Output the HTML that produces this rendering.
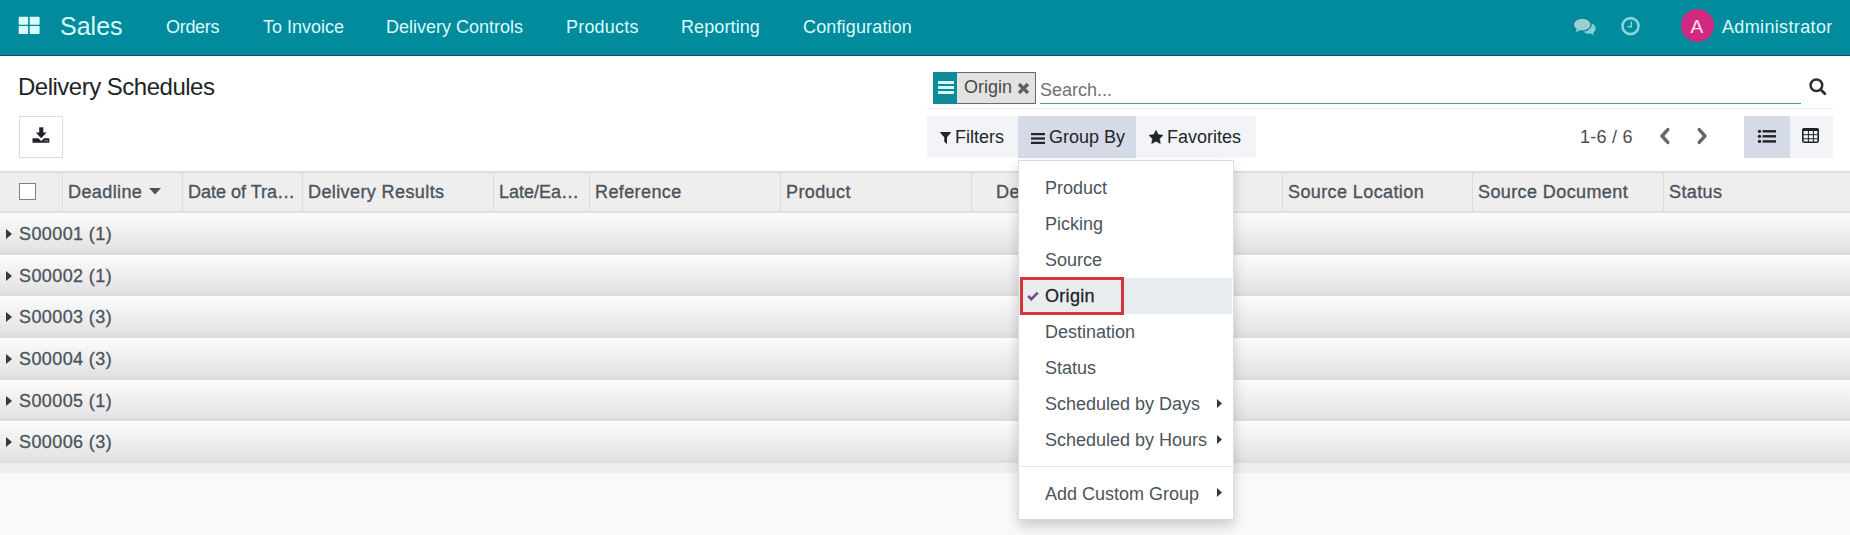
<!DOCTYPE html>
<html><head><meta charset="utf-8">
<style>
*{box-sizing:border-box;margin:0;padding:0}
html,body{width:1850px;height:535px;overflow:hidden}
body{position:relative;background:#f8f9fa;font-family:"Liberation Sans",sans-serif;color:#4c4c4c}
.abs{position:absolute}
.nav{left:0;top:0;width:1850px;height:56px;background:#018b9c;border-bottom:1px solid #07505e}
.nt{position:absolute;top:0;line-height:55px;height:55px;color:#dafcff;font-size:18px;white-space:nowrap}
.cp{left:0;top:56px;width:1850px;height:115px;background:#fff}
.txt{position:absolute;white-space:nowrap}
.thead{left:0;top:171px;width:1850px;height:42px;background:#eeeeee;border-top:2px solid #dcdde1;border-bottom:2px solid #dee0e4}
.th{position:absolute;top:-1px;height:40px;line-height:40px;font-size:18px;letter-spacing:0.4px;color:#4b545c;-webkit-text-stroke:0.35px #4b545c;white-space:nowrap}
.sep{position:absolute;top:-1px;width:1px;height:39px;background:#dcdcdc}
.grow{position:absolute;left:0;width:1850px;height:41.65px;background:linear-gradient(to bottom,#fcfcfc 0,#e2e2e2 calc(100% - 3px),#dcdde1 calc(100% - 3px),#dcdde1 100%)}
.gt{position:absolute;left:19px;top:1px;line-height:40px;letter-spacing:0.4px;font-size:18px;color:#4b545c;-webkit-text-stroke:0.3px #4b545c;white-space:nowrap}
.dd{left:1018px;top:160px;width:216px;height:360px;background:#fff;border:1px solid #dcdcdc;box-shadow:0 6px 12px rgba(0,0,0,.18)}
.di{position:absolute;left:26px;font-size:18px;color:#4b545c;white-space:nowrap}
</style></head><body>

<!-- NAVBAR -->
<div class="abs nav">
  <svg class="abs" style="left:18px;top:16px" width="23" height="20" viewBox="0 0 23 20">
    <rect x="0.7" y="0.7" width="9.4" height="8.1" rx="0.8" fill="#dafcff"/>
    <rect x="11.7" y="0.7" width="9.9" height="8.1" rx="0.8" fill="#dafcff"/>
    <rect x="0.7" y="9.9" width="9.4" height="8.1" rx="0.8" fill="#dafcff"/>
    <rect x="11.7" y="9.9" width="9.9" height="8.1" rx="0.8" fill="#dafcff"/>
  </svg>
  <div class="nt" style="left:60px;top:-1px;font-size:25px">Sales</div>
  <div class="nt" style="left:166px;letter-spacing:-0.3px">Orders</div>
  <div class="nt" style="left:263px">To Invoice</div>
  <div class="nt" style="left:386px">Delivery Controls</div>
  <div class="nt" style="left:566px;letter-spacing:0.2px">Products</div>
  <div class="nt" style="left:681px;letter-spacing:0.1px">Reporting</div>
  <div class="nt" style="left:803px;letter-spacing:0.15px">Configuration</div>
  <!-- chat icon -->
  <svg class="abs" style="left:1572px;top:16px" width="26" height="21" viewBox="0 0 26 21">
    <ellipse cx="17" cy="12.4" rx="6.6" ry="5.4" fill="#82d3d8"/>
    <path d="M18.5 16.5 L21.6 19.6 L21.2 15.2 Z" fill="#82d3d8"/>
    <ellipse cx="10.2" cy="8.6" rx="8.9" ry="6.6" fill="#9ccfd3" stroke="#03808f" stroke-width="1.3"/>
    <path d="M4.6 13 L4 16 L8.5 14.2 Z" fill="#9ccfd3"/>
  </svg>
  <svg class="abs" style="left:1620px;top:15px" width="22" height="22" viewBox="0 0 22 22">
    <circle cx="10.5" cy="11.1" r="8" fill="none" stroke="#82d8dc" stroke-width="2.6"/>
    <path d="M11.3 6.6 V11.8 H7.4" fill="none" stroke="#82d8dc" stroke-width="1.5"/>
  </svg>
  <div class="abs" style="left:1681px;top:9px;width:33px;height:33px;border-radius:50%;background:#d02a80"></div>
  <div class="nt" style="left:1690.5px;top:-1px;color:#fde6f2;font-size:19px">A</div>
  <div class="nt" style="left:1722px;letter-spacing:0.35px">Administrator</div>
</div>

<!-- CONTROL PANEL -->
<div class="abs cp"></div>
<div class="txt" style="left:18px;top:72px;font-size:24px;line-height:30px;letter-spacing:-0.5px;color:#212529">Delivery Schedules</div>
<div class="abs" style="left:19px;top:116px;width:44px;height:42px;border:1px solid #dcdcdc;background:#fff"></div>
<svg class="abs" style="left:32px;top:127px" width="18" height="16" viewBox="0 0 18 16">
  <rect x="7.2" y="0.3" width="4.1" height="6" fill="#1f2328"/>
  <path d="M3.8 5.6 H14.6 L9.2 11.2 Z" fill="#1f2328"/>
  <path d="M0.5 11.2 H6.3 L9.2 13.9 L12.1 11.2 H17.3 V15.7 H0.5 Z" fill="#1f2328"/>
  <rect x="12.6" y="13.1" width="1.2" height="1.2" fill="#aaa"/><rect x="14.6" y="13.1" width="1.2" height="1.2" fill="#aaa"/>
</svg>

<!-- search facet -->
<div class="abs" style="left:933px;top:72px;width:103px;height:32px;background:#e2e2e0;border:1px solid #6c6c6c"></div>
<div class="abs" style="left:933px;top:72px;width:24px;height:32px;background:#0f8a98"></div>
<div class="abs" style="left:938px;top:81px;width:16px;height:3px;background:#d4fbff"></div>
<div class="abs" style="left:938px;top:86px;width:16px;height:3px;background:#d4fbff"></div>
<div class="abs" style="left:938px;top:91px;width:16px;height:3px;background:#d4fbff"></div>
<div class="txt" style="left:964px;top:73px;font-size:18px;line-height:28px;color:#474a4d">Origin</div>
<svg class="abs" style="left:1017px;top:82px" width="13" height="12" viewBox="0 0 13 12">
  <path d="M2 2 L11 11 M11 2 L2 11" stroke="#5f6163" stroke-width="3.4"/>
</svg>
<div class="txt" style="left:1040px;top:76px;font-size:18px;line-height:28px;color:#6f7173">Search...</div>
<div class="abs" style="left:1040px;top:102.5px;width:761px;height:1.3px;background:#4f9ba6"></div>
<div class="abs" style="left:927px;top:108px;width:906px;height:1px;background:#ececec"></div>
<svg class="abs" style="left:1809px;top:78px" width="18" height="18" viewBox="0 0 18 18">
  <circle cx="7.4" cy="7.3" r="5.8" fill="none" stroke="#2b2f33" stroke-width="2.5"/>
  <path d="M11.6 11.5 L15.9 15.8" stroke="#2b2f33" stroke-width="2.8" stroke-linecap="round"/>
</svg>

<!-- buttons -->
<div class="abs" style="left:927px;top:116px;width:329px;height:41px;background:#f3f4f7"></div>
<div class="abs" style="left:1018px;top:116px;width:118px;height:42px;background:#d4dae6"></div>
<svg class="abs" style="left:940px;top:132px" width="12" height="13" viewBox="0 0 12 13">
  <path d="M0 0 H11 Q10.5 1.5 7 5.3 V12 L4.3 9.8 V5.3 Q0.5 1.5 0 0 Z" fill="#212529"/>
</svg>
<div class="txt" style="left:955px;top:123px;font-size:18px;line-height:28px;color:#212529">Filters</div>
<svg class="abs" style="left:1031px;top:133px" width="14" height="11" viewBox="0 0 14 11">
  <rect x="0" y="0" width="14" height="2.2" fill="#212529"/>
  <rect x="0" y="4.4" width="14" height="2.2" fill="#212529"/>
  <rect x="0" y="8.8" width="14" height="2.2" fill="#212529"/>
</svg>
<div class="txt" style="left:1049px;top:123px;font-size:18px;line-height:28px;color:#212529">Group By</div>
<svg class="abs" style="left:1149px;top:130px" width="14" height="14" viewBox="0 0 14 14" overflow="visible">
  <path d="M7.00 0.30 L9.17 4.61 L13.94 5.34 L10.52 8.74 L11.29 13.51 L7.00 11.30 L2.71 13.51 L3.48 8.74 L0.06 5.34 L4.83 4.61 Z" fill="#212529" stroke="#212529" stroke-width="0.6" stroke-linejoin="round"/>
</svg>
<div class="txt" style="left:1167px;top:123px;font-size:18px;line-height:28px;color:#212529">Favorites</div>

<!-- pager -->
<div class="txt" style="left:1580px;top:123px;font-size:18px;line-height:28px;letter-spacing:0.25px;color:#4a4d50">1-6 / 6</div>
<svg class="abs" style="left:1658px;top:127px" width="13" height="18" viewBox="0 0 13 18">
  <path d="M9.8 2.6 L4 9 L9.8 15.4" fill="none" stroke="#666" stroke-width="3.4" stroke-linecap="round" stroke-linejoin="round"/>
</svg>
<svg class="abs" style="left:1696px;top:127px" width="13" height="18" viewBox="0 0 13 18">
  <path d="M3.2 2.6 L9 9 L3.2 15.4" fill="none" stroke="#666" stroke-width="3.4" stroke-linecap="round" stroke-linejoin="round"/>
</svg>
<div class="abs" style="left:1744px;top:116px;width:89px;height:42px;background:#f3f4f7"></div>
<div class="abs" style="left:1744px;top:116px;width:46px;height:42px;background:#d4dae6"></div>
<svg class="abs" style="left:1757px;top:129px" width="20" height="15" viewBox="0 0 20 15">
  <circle cx="2.5" cy="2.3" r="1.65" fill="#1f2328"/><circle cx="2.5" cy="7.3" r="1.65" fill="#1f2328"/><circle cx="2.5" cy="12.4" r="1.65" fill="#1f2328"/>
  <rect x="5.6" y="1.1" width="13.4" height="2.4" fill="#1f2328"/><rect x="5.6" y="6.1" width="13.4" height="2.4" fill="#1f2328"/><rect x="5.6" y="11.2" width="13.4" height="2.4" fill="#1f2328"/>
</svg>
<svg class="abs" style="left:1802px;top:128px" width="17" height="15" viewBox="0 0 17 15">
  <rect x="0.8" y="0.8" width="15.4" height="13.4" rx="1.5" fill="none" stroke="#1f2328" stroke-width="1.6"/>
  <rect x="0.5" y="0.5" width="16" height="2.6" rx="1" fill="#1f2328"/>
  <rect x="1" y="6.2" width="15" height="1" fill="#1f2328"/>
  <rect x="1" y="10.3" width="15" height="1" fill="#1f2328"/>
  <rect x="5.9" y="2" width="1" height="12" fill="#1f2328"/>
  <rect x="10.9" y="2" width="1" height="12" fill="#1f2328"/>
</svg>

<!-- TABLE HEADER -->
<div class="abs thead">
  <div class="abs" style="left:19px;top:10px;width:17px;height:17px;background:#fff;border:1px solid #808080"></div>
  <div class="sep" style="left:58px;background:#e6e6e6"></div><div class="sep" style="left:62px"></div>
  <div class="th" style="left:68px">Deadline</div>
  <svg class="abs" style="left:149px;top:15px" width="12" height="7" viewBox="0 0 12 7"><path d="M0 0 H12 L6 6.5 Z" fill="#4b545c"/></svg>
  <div class="sep" style="left:182px"></div>
  <div class="th" style="left:188px;letter-spacing:0">Date of Tra…</div>
  <div class="sep" style="left:302px"></div>
  <div class="th" style="left:308px">Delivery Results</div>
  <div class="sep" style="left:493px"></div>
  <div class="th" style="left:499px;letter-spacing:0">Late/Ea…</div>
  <div class="sep" style="left:589px"></div>
  <div class="th" style="left:595px">Reference</div>
  <div class="sep" style="left:780px"></div>
  <div class="th" style="left:786px">Product</div>
  <div class="sep" style="left:971px"></div>
  <div class="th" style="left:996px">Destination</div>
  <div class="sep" style="left:1282px"></div>
  <div class="th" style="left:1288px">Source Location</div>
  <div class="sep" style="left:1472px"></div>
  <div class="th" style="left:1478px">Source Document</div>
  <div class="sep" style="left:1663px"></div>
  <div class="th" style="left:1669px">Status</div>
</div>

<!-- GROUP ROWS -->
<div class="grow" style="top:213.00px"><svg class="abs" style="left:6px;top:16px" width="6" height="10" viewBox="0 0 6 10"><path d="M0 0 L6 5 L0 10 Z" fill="#333a40"/></svg><div class="gt">S00001 (1)</div></div>
<div class="grow" style="top:254.65px"><svg class="abs" style="left:6px;top:16px" width="6" height="10" viewBox="0 0 6 10"><path d="M0 0 L6 5 L0 10 Z" fill="#333a40"/></svg><div class="gt">S00002 (1)</div></div>
<div class="grow" style="top:296.30px"><svg class="abs" style="left:6px;top:16px" width="6" height="10" viewBox="0 0 6 10"><path d="M0 0 L6 5 L0 10 Z" fill="#333a40"/></svg><div class="gt">S00003 (3)</div></div>
<div class="grow" style="top:337.95px"><svg class="abs" style="left:6px;top:16px" width="6" height="10" viewBox="0 0 6 10"><path d="M0 0 L6 5 L0 10 Z" fill="#333a40"/></svg><div class="gt">S00004 (3)</div></div>
<div class="grow" style="top:379.60px"><svg class="abs" style="left:6px;top:16px" width="6" height="10" viewBox="0 0 6 10"><path d="M0 0 L6 5 L0 10 Z" fill="#333a40"/></svg><div class="gt">S00005 (1)</div></div>
<div class="grow" style="top:421.25px"><svg class="abs" style="left:6px;top:16px" width="6" height="10" viewBox="0 0 6 10"><path d="M0 0 L6 5 L0 10 Z" fill="#333a40"/></svg><div class="gt">S00006 (3)</div></div>
<div class="abs" style="left:0;top:463px;width:1850px;height:10px;background:#eeeeee"></div>

<!-- DROPDOWN -->
<div class="abs dd">
  <div class="di" style="top:14px;line-height:26px">Product</div>
  <div class="di" style="top:50px;line-height:26px">Picking</div>
  <div class="di" style="top:86px;line-height:26px">Source</div>
  <div class="abs" style="left:0;top:117px;width:213px;height:36px;background:#e9ecef"></div>
  <svg class="abs" style="left:8px;top:130px" width="12" height="10" viewBox="0 0 12 10"><path d="M1.2 5 L4.3 8.2 L10.8 1.6" fill="none" stroke="#7a4b89" stroke-width="2.6"/></svg>
  <div class="di" style="top:122px;line-height:26px;letter-spacing:0.3px;color:#212529;-webkit-text-stroke:0.3px #212529">Origin</div>
  <div class="abs" style="left:1px;top:116px;width:103.5px;height:38px;border:3px solid #d5353c"></div>
  <div class="di" style="top:158px;line-height:26px">Destination</div>
  <div class="di" style="top:194px;line-height:26px">Status</div>
  <div class="di" style="top:230px;line-height:26px">Scheduled by Days</div>
  <svg class="abs" style="left:198px;top:238px" width="5" height="9" viewBox="0 0 5 9"><path d="M0 0 L5 4.5 L0 9 Z" fill="#333a40"/></svg>
  <div class="di" style="top:266px;line-height:26px">Scheduled by Hours</div>
  <svg class="abs" style="left:198px;top:274px" width="5" height="9" viewBox="0 0 5 9"><path d="M0 0 L5 4.5 L0 9 Z" fill="#333a40"/></svg>
  <div class="abs" style="left:0;top:305px;width:213px;height:1px;background:#e6e6e6"></div>
  <div class="di" style="top:320px;line-height:26px">Add Custom Group</div>
  <svg class="abs" style="left:198px;top:327px" width="5" height="9" viewBox="0 0 5 9"><path d="M0 0 L5 4.5 L0 9 Z" fill="#333a40"/></svg>
</div>

</body></html>
